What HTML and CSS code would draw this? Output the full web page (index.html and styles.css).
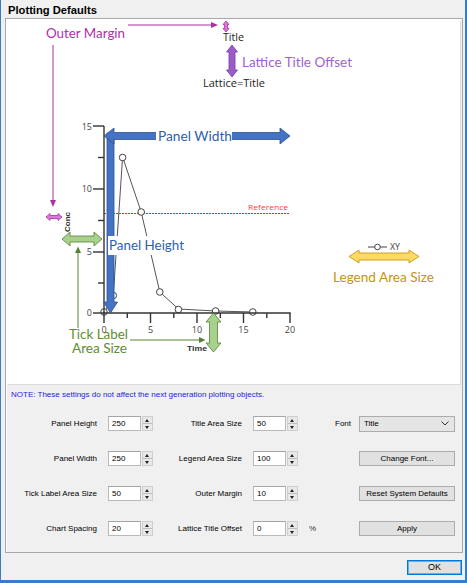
FILE: index.html
```html
<!DOCTYPE html>
<html>
<head>
<meta charset="utf-8">
<link rel="stylesheet" href="styles.css">
</head>
<body>
<div class="window">
  <div class="title">Plotting Defaults</div>
  <div class="group">
    <div class="canvas">
      <svg class="chart" width="453" height="364" viewBox="7 20 453 364" xmlns="http://www.w3.org/2000/svg">
        <!-- top annotations -->
        <text class="anno" x="46" y="38" fill="#b02ea8" textLength="79" lengthAdjust="spacingAndGlyphs">Outer Margin</text>
        <line x1="128" y1="25" x2="212" y2="25" stroke="#a8329e" stroke-width="1"/>
        <polygon points="211,22 218,25 211,28" fill="#a8329e"/>
        <path d="M226,21 L229,24.5 L227.5,24.5 L227.5,28.5 L229,28.5 L226,32 L223,28.5 L224.5,28.5 L224.5,24.5 L223,24.5 Z" fill="#dc78dc" stroke="#a8329e" stroke-width="0.8"/>
        <text class="lbl" x="223" y="41" textLength="21" lengthAdjust="spacingAndGlyphs">Title</text>
        <path d="M232,45 L237.5,52 L235,52 L235,70 L237.5,70 L232,77 L226.5,70 L229,70 L229,52 L226.5,52 Z" fill="#9a5cc8" stroke="#7a3aa8" stroke-width="0.8"/>
        <text class="anno" x="242" y="67" fill="#a15fd5" textLength="110" lengthAdjust="spacingAndGlyphs">Lattice Title Offset</text>
        <text class="lbl" x="203" y="87" textLength="62" lengthAdjust="spacingAndGlyphs">Lattice=Title</text>

        <!-- outer margin left -->
        <line x1="53" y1="45" x2="53" y2="201" stroke="#a8329e" stroke-width="1"/>
        <polygon points="50,200 56,200 53,207" fill="#a8329e"/>
        <path d="M46,217 L50,213.5 L50,215.5 L58,215.5 L58,213.5 L62,217 L58,220.5 L58,218.5 L50,218.5 L50,220.5 Z" fill="#dc78dc" stroke="#a8329e" stroke-width="0.8"/>
        <text class="axt" transform="translate(69.5,222) rotate(-90)" text-anchor="middle" textLength="20" lengthAdjust="spacingAndGlyphs">Conc</text>

        <!-- reference line -->
        <line class="refline" x1="104" y1="213.5" x2="290" y2="213.5"/>
        <text class="ref" x="248" y="210" textLength="40" lengthAdjust="spacingAndGlyphs">Reference</text>

        <!-- data -->
        <polyline points="104,313 113.3,295.5 122.6,157 141.2,212 159.8,292 178.4,309 215.6,311 252.8,312" fill="none" stroke="#555" stroke-width="1"/>
        <g fill="#fff" stroke="#444" stroke-width="1">
          <circle cx="104" cy="312" r="3.3"/>
          <circle cx="113.3" cy="295.5" r="3.3"/>
          <circle cx="122.6" cy="157.5" r="3.3"/>
          <circle cx="141.2" cy="212" r="3.3"/>
          <circle cx="159.8" cy="292" r="3.3"/>
          <circle cx="178.4" cy="309.5" r="3.3"/>
          <circle cx="215.6" cy="311" r="3.3"/>
          <circle cx="252.8" cy="312" r="3.3"/>
        </g>

        <!-- axes -->
        <g stroke="#333" stroke-width="1.4" fill="none">
          <line x1="104" y1="126" x2="104" y2="313.7"/>
          <line x1="103.3" y1="313" x2="290.7" y2="313"/>
          <line x1="93" y1="126" x2="104" y2="126"/>
          <line x1="98" y1="157.5" x2="104" y2="157.5"/>
          <line x1="93" y1="189" x2="104" y2="189"/>
          <line x1="98" y1="220.5" x2="104" y2="220.5"/>
          <line x1="93" y1="252" x2="104" y2="252"/>
          <line x1="98" y1="283" x2="104" y2="283"/>
          <line x1="93" y1="313" x2="104" y2="313"/>
          <line x1="104" y1="313" x2="104" y2="323"/>
          <line x1="127.3" y1="313" x2="127.3" y2="318"/>
          <line x1="150.5" y1="313" x2="150.5" y2="323"/>
          <line x1="173.8" y1="313" x2="173.8" y2="318"/>
          <line x1="197" y1="313" x2="197" y2="323"/>
          <line x1="220.3" y1="313" x2="220.3" y2="318"/>
          <line x1="243.5" y1="313" x2="243.5" y2="323"/>
          <line x1="266.8" y1="313" x2="266.8" y2="318"/>
          <line x1="290" y1="313" x2="290" y2="323"/>
        </g>
        <g class="tick" text-anchor="end">
          <text x="92" y="130">15</text>
          <text x="92" y="192">10</text>
          <text x="92" y="255">5</text>
          <text x="92" y="316">0</text>
        </g>
        <g class="tick" text-anchor="middle">
          <text x="104" y="333">0</text>
          <text x="150.5" y="333">5</text>
          <text x="197" y="333">10</text>
          <text x="243.5" y="333">15</text>
          <text x="290" y="333">20</text>
        </g>
        <text class="axt" x="187" y="351" textLength="20" lengthAdjust="spacingAndGlyphs">Time</text>

        <!-- panel arrows -->
        <path d="M107,133 L114,133 L114,302 L117.5,302 L110.5,313 L103.5,302 L107,302 Z" fill="#4472c4" stroke="#2f528f" stroke-width="0.8"/>
        <path d="M104,136 L114,128 L114,132.5 L280,132.5 L280,128 L290,136 L280,144 L280,139.5 L114,139.5 L114,144 Z" fill="#4472c4" stroke="#2f528f" stroke-width="0.8"/>
        <rect x="156" y="129" width="76" height="14" fill="#fff"/>
        <text class="anno" x="158" y="141" fill="#2f5fae" textLength="74" lengthAdjust="spacingAndGlyphs">Panel Width</text>
        <rect x="108" y="236" width="78" height="19" fill="#fff"/>
        <text class="anno" x="109" y="250" fill="#2f5fae" textLength="75" lengthAdjust="spacingAndGlyphs">Panel Height</text>

        <!-- tick label area -->
        <path d="M62,239 L70,232 L70,236 L94,236 L94,232 L102,239 L94,246 L94,242 L70,242 L70,246 Z" fill="#a9d18e" stroke="#548235" stroke-width="0.8"/>
        <line x1="78" y1="252" x2="78" y2="328" stroke="#548235" stroke-width="1"/>
        <polygon points="75,253 81,253 78,246.5" fill="#548235"/>
        <line x1="130" y1="340" x2="200" y2="340" stroke="#548235" stroke-width="1"/>
        <polygon points="199,337 205.5,340 199,343" fill="#548235"/>
        <text class="anno" x="69" y="339" fill="#5e8e30" textLength="59" lengthAdjust="spacingAndGlyphs">Tick Label</text>
        <text class="anno" x="72" y="353" fill="#5e8e30" textLength="55" lengthAdjust="spacingAndGlyphs">Area Size</text>
        <path d="M213.5,313 L221,322 L217.5,322 L217.5,343 L221,343 L213.5,352 L206,343 L209.5,343 L209.5,322 L206,322 Z" fill="#a9d18e" stroke="#548235" stroke-width="0.8"/>

        <!-- legend -->
        <line x1="368" y1="247" x2="387" y2="247" stroke="#444" stroke-width="1"/>
        <circle cx="377.5" cy="247" r="2.8" fill="#fff" stroke="#444" stroke-width="1"/>
        <text class="tick" x="390" y="250" textLength="10" lengthAdjust="spacingAndGlyphs">XY</text>
        <path d="M349,256.5 L359,250 L359,253 L409,253 L409,250 L419,256.5 L409,263 L409,260 L359,260 L359,263 Z" fill="#ffd966" stroke="#bf9000" stroke-width="0.8"/>
        <text class="anno" x="333" y="282" fill="#c39613" textLength="101" lengthAdjust="spacingAndGlyphs">Legend Area Size</text>
      </svg>
    </div>
    <div class="note">NOTE: These settings do not affect the next generation plotting objects.</div>
    <div class="form">
      <div class="lbl">Panel Height</div>
      <div class="spin"><div class="spin-val">250</div><div class="spin-btn"><span class="up"></span><span class="down"></span></div></div>
      <div class="lbl">Title Area Size</div>
      <div class="spin"><div class="spin-val">50</div><div class="spin-btn"><span class="up"></span><span class="down"></span></div></div>
      <div></div>
      <div class="font-lbl">Font</div>
      <div class="select"><span>Title</span><svg width="8" height="5" viewBox="0 0 8 5"><polyline points="0.5,0.5 4,4 7.5,0.5" fill="none" stroke="#333" stroke-width="1"/></svg></div>

      <div class="lbl">Panel Width</div>
      <div class="spin"><div class="spin-val">250</div><div class="spin-btn"><span class="up"></span><span class="down"></span></div></div>
      <div class="lbl">Legend Area Size</div>
      <div class="spin"><div class="spin-val">100</div><div class="spin-btn"><span class="up"></span><span class="down"></span></div></div>
      <div></div>
      <div></div>
      <div class="btn">Change Font...</div>

      <div class="lbl">Tick Label Area Size</div>
      <div class="spin"><div class="spin-val">50</div><div class="spin-btn"><span class="up"></span><span class="down"></span></div></div>
      <div class="lbl">Outer Margin</div>
      <div class="spin"><div class="spin-val">10</div><div class="spin-btn"><span class="up"></span><span class="down"></span></div></div>
      <div></div>
      <div></div>
      <div class="btn">Reset System Defaults</div>

      <div class="lbl">Chart Spacing</div>
      <div class="spin"><div class="spin-val">20</div><div class="spin-btn"><span class="up"></span><span class="down"></span></div></div>
      <div class="lbl">Lattice Title Offset</div>
      <div class="spin"><div class="spin-val">0</div><div class="spin-btn"><span class="up"></span><span class="down"></span></div></div>
      <div class="pct">%</div>
      <div></div>
      <div class="btn">Apply</div>
    </div>
  </div>
  <div class="footer">
    <div class="ok">OK</div>
  </div>
</div>
</body>
</html>
```

FILE: styles.css
```css
html, body {
  margin: 0;
  padding: 0;
  background: #f0f0f0;
}
body {
  font-family: "Liberation Sans", Arial, sans-serif;
  color: #000;
}
.window {
  width: 467px;
  height: 583px;
  box-sizing: border-box;
  background: #f0f0f0;
  border-left: 1px solid #3a7bc8;
  border-right: 2px solid #3a7bc8;
  border-bottom: 3px solid #3a7bc8;
  display: flex;
  flex-direction: column;
}
.title {
  height: 18px;
  line-height: 20px;
  padding-left: 7px;
  font-weight: bold;
  font-size: 11.2px;
}
.group {
  margin-left: 4px;
  width: 458px;
  height: 535px;
  box-sizing: border-box;
  border: 1px solid #a8a8a8;
  box-shadow: inset 1px 1px 0 #fff;
}
.canvas {
  margin: 1px 0 0 1px;
  width: 453px;
  height: 364px;
  background: #fff;
  box-shadow: 1px 1px 0 #dcdcdc;
}
.chart {
  display: block;
}
.chart .refline {
  stroke: #ff2020;
  stroke-width: 1;
  stroke-dasharray: 2 1;
  shape-rendering: crispEdges;
}
.chart .anno {
  font-family: Lato, "Open Sans", sans-serif;
  font-size: 14px;
}
.chart .lbl {
  font-family: "Open Sans", "Liberation Sans", sans-serif;
  font-size: 10.5px;
  fill: #222;
}
.chart .tick {
  font-family: "Open Sans", "Liberation Sans", sans-serif;
  font-size: 9px;
  fill: #444;
}
.chart .axt {
  font-family: "Liberation Sans", sans-serif;
  font-size: 8px;
  font-weight: bold;
  fill: #333;
}
.chart .ref {
  font-family: "Open Sans", "Liberation Sans", sans-serif;
  font-size: 8px;
  fill: #ff3b3b;
}
.note {
  height: 22px;
  line-height: 22px;
  padding-left: 5px;
  font-size: 8px;
  color: #2424e0;
}
.form {
  display: grid;
  grid-template-columns: 102px 45px 100px 45px 37px 24px 96px;
  grid-auto-rows: 35px;
  align-items: center;
  font-size: 8px;
}
.form .lbl {
  text-align: right;
  padding-right: 11px;
}
.spin {
  display: flex;
  height: 15px;
}
.spin-val {
  width: 33px;
  box-sizing: border-box;
  border: 1px solid #b9b9b9;
  border-top-color: #a5a5a5;
  background: #fff;
  padding-left: 3px;
  line-height: 13px;
}
.spin-btn {
  margin-left: 1px;
  width: 11px;
  box-sizing: border-box;
  border: 1px solid #cfcfcf;
  background: #e8e8e8;
  display: flex;
  flex-direction: column;
}
.spin-btn span {
  flex: 1;
  position: relative;
}
.spin-btn .up {
  border-bottom: 1px solid #bdbdbd;
}
.spin-btn .up::after,
.spin-btn .down::after {
  content: "";
  position: absolute;
  left: 2px;
  width: 0;
  height: 0;
  border-left: 2.5px solid transparent;
  border-right: 2.5px solid transparent;
}
.spin-btn .up::after {
  top: 2px;
  border-bottom: 3px solid #222;
}
.spin-btn .down::after {
  top: 2px;
  border-top: 3px solid #222;
}
.pct {
  padding-left: 11px;
  color: #333;
}
.select {
  height: 16px;
  box-sizing: border-box;
  border: 1px solid #acacac;
  background: #e5e5e5;
  display: flex;
  align-items: center;
  justify-content: space-between;
  padding: 0 5px 0 4px;
}
.btn {
  height: 15px;
  box-sizing: border-box;
  border: 1px solid #adadad;
  background: #e1e1e1;
  text-align: center;
  line-height: 13px;
}
.footer {
  display: flex;
  justify-content: flex-end;
  padding: 7px 3px 0 0;
}
.ok {
  width: 55px;
  height: 15px;
  box-sizing: border-box;
  border: 1px solid #0078d7;
  box-shadow: inset 0 0 0 1px #66aee8;
  background: #e1e1e1;
  text-align: center;
  line-height: 13px;
  font-size: 9px;
}
```
